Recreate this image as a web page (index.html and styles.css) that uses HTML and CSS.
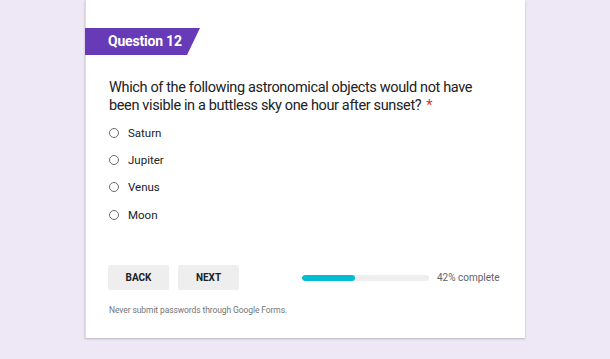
FILE: index.html
```html
<!DOCTYPE html>
<html lang="en">
<head>
    <meta charset="UTF-8">
    <meta name="viewport" content="width=device-width, initial-scale=1.0">
    <title>Question 12</title>
    <link rel="stylesheet" href="styles.css">
</head>
<body>
    <div class="card">
        <div class="tag">Question 12</div>

        <div class="content">
            <p class="question">Which of the following astronomical objects would not have been visible in a buttless sky one hour after sunset?<span class="req">*</span></p>

            <div class="options">
                <label class="option"><span class="radio"></span>Saturn</label>
                <label class="option"><span class="radio"></span>Jupiter</label>
                <label class="option"><span class="radio"></span>Venus</label>
                <label class="option"><span class="radio"></span>Moon</label>
            </div>

            <div class="nav">
                <button class="btn">BACK</button>
                <button class="btn">NEXT</button>
                <div class="progress">
                    <div class="bar"><div class="fill" style="width: 42%"></div></div>
                    <span class="pct">42% complete</span>
                </div>
            </div>

            <p class="note">Never submit passwords through Google Forms.</p>
        </div>
    </div>
</body>
</html>
```

FILE: styles.css
```css
body {
    font-family: Roboto, "Liberation Sans", Arial, sans-serif;
    background-color: #ede7f6;
    color: #202124;
    margin: 0;
    padding: 0;
    height: 359px;
    overflow: hidden;
}

.card {
    background-color: #fff;
    margin-left: 85px;
    width: 440px;
    height: 338px;
    padding-top: 28px;
    box-sizing: border-box;
    border-left: 1px solid #ddd8e6;
    box-shadow: 0 1px 2px rgba(0, 0, 0, 0.22);
}

.tag {
    width: 115px;
    height: 27px;
    margin-left: -1px;
    padding-left: 23px;
    box-sizing: border-box;
    background-color: #673ab7;
    color: #fff;
    font-size: 14px;
    font-weight: 700;
    letter-spacing: -0.2px;
    line-height: 27px;
    clip-path: polygon(0 0, 100% 0, calc(100% - 13px) 100%, 0 100%);
}

.content {
    padding: 0 20px 0 23px;
}

.question {
    margin: 24px 0 4px;
    font-size: 14.5px;
    letter-spacing: -0.36px;
    line-height: 18px;
    color: #202124;
}

.req {
    margin-left: 5px;
    letter-spacing: 0;
    color: #d93025;
}

.option {
    display: flex;
    align-items: center;
    height: 27.3px;
    font-size: 11.5px;
    color: #202124;
}

.radio {
    width: 8px;
    height: 8px;
    border: 1.5px solid #6b6b6b;
    border-radius: 50%;
    margin-right: 9px;
}

.nav {
    display: flex;
    align-items: center;
    margin-top: 37px;
    margin-left: -1px;
}

.btn {
    width: 61px;
    height: 25px;
    margin-right: 9px;
    border: none;
    border-radius: 2px;
    background-color: #eeeeee;
    color: #202124;
    font-family: Roboto, "Liberation Sans", Arial, sans-serif;
    font-size: 10px;
    font-weight: 700;
    padding: 0;
}

.progress {
    display: flex;
    align-items: center;
    margin-left: 54px;
    white-space: nowrap;
}

.bar {
    width: 127px;
    height: 6px;
    border-radius: 3px;
    background-color: #eeeeee;
    overflow: hidden;
}

.fill {
    height: 100%;
    border-radius: 3px;
    background-color: #00bcd4;
}

.pct {
    margin-left: 8px;
    font-size: 10px;
    color: #5f6368;
}

.note {
    margin: 15px 0 0;
    font-size: 8.5px;
    letter-spacing: -0.1px;
    color: #757575;
}
```
